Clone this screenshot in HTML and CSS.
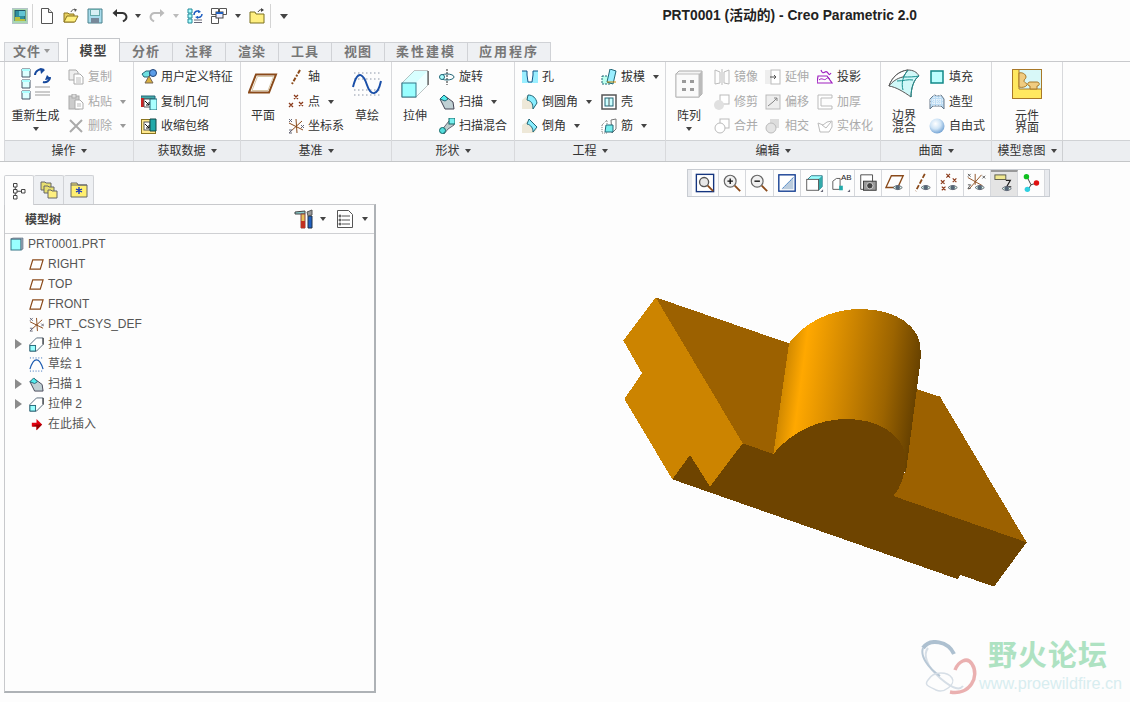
FILE: index.html
```html
<!DOCTYPE html>
<html lang="zh">
<head>
<meta charset="utf-8">
<title>PRT0001 - Creo Parametric 2.0</title>
<link rel="stylesheet" href="styles.css">
</head>
<body>
<svg class="sprite" xmlns="http://www.w3.org/2000/svg">
  <defs><radialGradient id="frs-g" cx=".4" cy=".35" r=".7"><stop offset="0" stop-color="#fff"/><stop offset=".5" stop-color="#cfe4f6"/><stop offset="1" stop-color="#6a9cd0"/></radialGradient></defs>
  <symbol id="i-app" viewBox="0 0 16 16"><rect x=".5" y=".5" width="15" height="15" fill="#a8d8b0" stroke="#b4c4c8"/><rect x="3" y="2.500" width="10" height="10" fill="#2f8f9f" stroke="#256"/><rect x="7" y="3" width="6" height="5" fill="#62c4d4"/><path d="M3 9h5v2h5v2H3z" fill="#b8c040"/></symbol>
  <symbol id="i-new" viewBox="0 0 16 16"><path d="M2.500.5h7l4 4v11h-11z" fill="#fff" stroke="#555"/><path d="M9.500.5v4h4" fill="#ddd" stroke="#555"/></symbol>
  <symbol id="i-open" viewBox="0 0 16 16"><path d="M1 5h4l1 1h5v8H1z" fill="#e8d060" stroke="#8a7520"/><path d="M1 14l3-6h11l-3 6z" fill="#fff080" stroke="#8a7520"/><path d="M8 4c1-3 4-3 5-2" fill="none" stroke="#555"/><path d="M11 .5l3 1-2 2.500z" fill="#555"/></symbol>
  <symbol id="i-save" viewBox="0 0 16 16"><path d="M1 1h14v14H1z" fill="#a8dcec" stroke="#48808c"/><rect x="3.500" y="1.500" width="9" height="6" fill="#d8f0f4" stroke="#6aa"/><rect x="4" y="10" width="8" height="5" fill="#789"/></symbol>
  <symbol id="i-undo" viewBox="0 0 16 16"><path d="M4 5h6a4 4 0 0 1 3 7l-2 1.500" fill="none" stroke="#333" stroke-width="2"/><path d="M5 1v8L.5 5z" fill="#333"/></symbol>
  <symbol id="i-redo" viewBox="0 0 16 16"><path d="M12 5H6a4 4 0 0 0-3 7l2 1.500" fill="none" stroke="#bbb" stroke-width="2"/><path d="M11 1v8l4.500-4z" fill="#bbb"/></symbol>
  <symbol id="i-regenq" viewBox="0 0 16 16"><path d="M1 1h4v4H1zM1 6h4v4H1zM1 11h4v4H1z" fill="#aff" stroke="#289"/><path d="M7 12h8M7 14.500h8" stroke="#667"/><path d="M7 7c0-4 4-5 6-3M15 6c0 3-3 4-5 3" fill="none" stroke="#1c5cc0" stroke-width="1.500"/><path d="M11 2l3 2-3 1zM11 11l-3-2 3-1z" fill="#1c5cc0"/></symbol>
  <symbol id="i-win" viewBox="0 0 16 16"><path d="M.5.5h7v6h-7zM8.500.5h7v6h-7zM.5 8.500h7v7h-7z" fill="#fff" stroke="#555"/><rect x="5" y="4" width="7" height="6" fill="#eef" stroke="#444"/><rect x="5" y="4" width="7" height="2" fill="#2060c0"/></symbol>
  <symbol id="i-wd" viewBox="0 0 16 16"><path d="M1 4h5l1 2h8v9H1z" fill="#ffef80" stroke="#7a7020"/><path d="M9 4c1-2 3-3 5-2" fill="none" stroke="#444"/><path d="M12 0l3 2-3 2z" fill="#444"/></symbol>
  <symbol id="i-copy" viewBox="0 0 16 16"><path d="M1 1h7l2 2v8H1z" fill="#eee" stroke="#aaa"/><path d="M6 5h6l3 3v7H6z" fill="#fff" stroke="#aaa"/><path d="M8 9h5M8 11h5M8 13h5" stroke="#bbb"/></symbol>
  <symbol id="i-paste" viewBox="0 0 16 16"><rect x="1" y="2" width="10" height="13" fill="#ccc" stroke="#aaa"/><rect x="4" y="0" width="4" height="4" fill="#ddd" stroke="#aaa"/><path d="M7 6h5l3 3v6H7z" fill="#fff" stroke="#aaa"/><path d="M9 10h4M9 12h4" stroke="#bbb"/></symbol>
  <symbol id="i-del" viewBox="0 0 16 16"><path d="M2 2l12 12M14 2L2 14" stroke="#aaa" stroke-width="2"/></symbol>
  <symbol id="i-udf" viewBox="0 0 16 16"><path d="M1 5l4-3h5l-2 6H3z" fill="#6fe0e0" stroke="#267"/><circle cx="12" cy="4" r="3.500" fill="#5a9ce8" stroke="#247"/><path d="M8 7l4 7H4z" fill="#d8b040" stroke="#765"/></symbol>
  <symbol id="i-cgeo" viewBox="0 0 16 16"><path d="M0 2h14v3H0z" fill="#4aa" stroke="#267"/><path d="M0 4h3v9H0z" fill="#c22"/><path d="M3 5h8v8H3z" fill="#fff" stroke="#555"/><path d="M9 5h7v11H9z" fill="#aff" stroke="#267"/><path d="M4 7l4 4m0-3v3H5" stroke="#111" fill="none"/></symbol>
  <symbol id="i-shrk" viewBox="0 0 16 16"><rect x=".5" y="1.500" width="14" height="14" fill="#ffe88c" stroke="#8a7420"/><rect x="3" y="4" width="6" height="8" fill="#fff" stroke="#555"/><path d="M9 1h6v12H9z" fill="#2aa" stroke="#144"/><path d="M4 6l4 4m0-3v3H5" stroke="#111" fill="none"/></symbol>
  <symbol id="i-regen" viewBox="0 0 30 32"><path d="M1 1h8v8H1zM1 12h8v8H1zM1 23h8v8H1z" fill="#dff" stroke="#456"/><path d="M1 1h8v2H1zM1 12h8v2H1zM1 23h8v2H1z" fill="#aff"/><path d="M14 24h15M14 27h15M14 19h15" stroke="#999"/><path d="M14 7c0-4 5-7 9-5M29 9c0 4-4 6-7 5" fill="none" stroke="#15489c" stroke-width="2"/><path d="M19 0l5 2-4 4zM26 7l4 4-6 1z" fill="#15489c"/></symbol>
  <symbol id="i-plane" viewBox="0 0 30 21"><path d="M8 1.500h20l-7 18H1z" fill="#fff" stroke="#8a4a1a" stroke-width="2"/><path d="M9.500 3.500h16l-5.500 14H4z" fill="#fff" stroke="#d8c8a8"/></symbol>
  <symbol id="i-axis" viewBox="0 0 16 16"><path d="M12 1l-8 14" stroke="#8a4a1a" stroke-width="2" stroke-dasharray="4 1.500 2 1.500"/></symbol>
  <symbol id="i-pt" viewBox="0 0 16 16"><path d="M6 1l4 4M10 1L6 5M1 9l4 4M5 9l-4 4M11 8l4 4M15 8l-4 4" stroke="#8a3a1a" stroke-width="1.300"/></symbol>
  <symbol id="i-csys" viewBox="0 0 16 16"><path d="M2 14L14 3M1 5l14 7M8 1l1 14" stroke="#8a4a1a"/><path d="M1 1l3 3M4 1L1 4M13 7l3 3M16 7l-3 3M1 12h3l-3 3h3" stroke="#667" fill="none"/></symbol>
  <symbol id="i-sk" viewBox="0 0 30 28"><path d="M2 3h27M2 25h27M2 9h27M2 20h27" stroke="#8c96a8" stroke-dasharray="1.500 2.500"/><path d="M1 17C6-3 12 6 15 15s10 14 14-4" fill="none" stroke="#1a4fa8" stroke-width="2"/></symbol>
  <symbol id="i-ext" viewBox="0 0 28 28"><path d="M1 13L13 1h14v14L15 27H1z" fill="#fff" stroke="#888"/><path d="M13 1h14L15 13H1z" fill="#d8ffff"/><path d="M15 13L27 1v14L15 27z" fill="#f0ffff"/><path d="M27 1v14" stroke="#333"/><rect x="1" y="13" width="14" height="14" fill="#9ff" stroke="#378"/></symbol>
  <symbol id="i-rev" viewBox="0 0 16 16"><path d="M8 0v16" stroke="#222" stroke-dasharray="2 1"/><ellipse cx="8" cy="8" rx="7" ry="3" fill="none" stroke="#267"/><circle cx="3" cy="8" r="2.500" fill="#aff" stroke="#267"/></symbol>
  <symbol id="i-swp" viewBox="0 0 16 16"><path d="M1 5l5 10h9l-1-7-8-6z" fill="#c0d0d4" stroke="#445"/><path d="M1 5l4-4 4 4-3 2z" fill="#5ee" stroke="#267"/></symbol>
  <symbol id="i-swb" viewBox="0 0 16 16"><path d="M2 13L10 3h5v4l-6 4-4 5z" fill="#bcc" stroke="#667"/><circle cx="3.500" cy="12.500" r="3" fill="#5dd" stroke="#166"/><rect x="10" y="0" width="6" height="6" fill="#7ee" stroke="#166"/></symbol>
  <symbol id="i-hole" viewBox="0 0 16 16"><path d="M0 2h5v4l1 7h4l1-7V2h5v12H0z" fill="#9ef"/><path d="M5 2v4l1 7h4l1-7V2z" fill="#fff"/><path d="M0 2h5v4l1 7h4l1-7V2h5" fill="none" stroke="#158"/></symbol>
  <symbol id="i-rnd" viewBox="0 0 16 16"><path d="M0 6l6-5c5 0 8 3 9 8l-4 6H0z" fill="#eee8d8"/><path d="M6 1c5 0 8 3 9 8l-4 6c0-6-2-8-6-9z" fill="#8ef" stroke="#267"/></symbol>
  <symbol id="i-chm" viewBox="0 0 16 16"><path d="M0 7l7-5 8 9-3 4H0z" fill="#eee8d8"/><path d="M7 2l8 8-4 5c0-4-2-7-6-8z" fill="#8ef" stroke="#267" transform="translate(0 -1)"/></symbol>
  <symbol id="i-drf" viewBox="0 0 16 16"><path d="M1 7h9v8H1z" fill="#bfe" stroke="#267" stroke-dasharray="2 1"/><path d="M9 0l6 2-3 13-6-2z" fill="#9ef" stroke="#267"/><path d="M6 13h9" stroke="#c80"/></symbol>
  <symbol id="i-shl" viewBox="0 0 16 16"><rect x="1" y="1" width="14" height="14" fill="#fff" stroke="#555" stroke-width="1.500"/><rect x="4" y="4" width="8" height="8" fill="#cff" stroke="#267"/><path d="M8 4v8" stroke="#555"/></symbol>
  <symbol id="i-rib" viewBox="0 0 16 16"><path d="M1 7l5-5v13H1z" fill="#fff" stroke="#777" stroke-dasharray="1 1"/><path d="M10 2l5-1v10l-4 4z" fill="#fff" stroke="#777"/><path d="M5 7h7v7H4z" fill="#7ee" stroke="#267"/></symbol>
  <symbol id="i-pat" viewBox="0 0 28 28"><path d="M1 4l3-3h23v23l-3 3H1z" fill="#f4f4f4" stroke="#aaa"/><path d="M24 4v23l3-3V1z" fill="#bbb"/><rect x="1" y="4" width="23" height="23" fill="#fafafa" stroke="#bbb"/><path d="M7 10h4v3H7zM15 10h4v3h-4zM7 18h4v3H7zM15 18h4v3h-4z" fill="#9a9a9a"/></symbol>
  <symbol id="i-mir" viewBox="0 0 16 16"><path d="M1 1l5 2v11l-5 1zM15 1l-5 2v11l5 1z" fill="none" stroke="#bbb"/><path d="M8 0v16" stroke="#bbb"/></symbol>
  <symbol id="i-trim" viewBox="0 0 16 16"><rect x="6" y="1" width="9" height="9" fill="#fff" stroke="#bbb"/><circle cx="5" cy="11" r="5" fill="#e0e0e0"/></symbol>
  <symbol id="i-mrg" viewBox="0 0 16 16"><rect x="6" y="1" width="9" height="9" fill="#fff" stroke="#bbb"/><circle cx="6" cy="10" r="5" fill="#fff" stroke="#bbb"/></symbol>
  <symbol id="i-exd" viewBox="0 0 16 16"><rect x="0" y="1" width="6" height="14" fill="#eee"/><rect x="6" y="1" width="9" height="14" fill="#fff" stroke="#bbb"/><path d="M5 8h6m-2-2l2 2-2 2" fill="none" stroke="#555"/></symbol>
  <symbol id="i-ofs" viewBox="0 0 16 16"><rect x="1" y="1" width="14" height="14" fill="#eee" stroke="#bbb"/><path d="M3 12L8 8l4-4m-3 0h3v3" fill="none" stroke="#888"/></symbol>
  <symbol id="i-int" viewBox="0 0 16 16"><rect x="5" y="1" width="9" height="9" fill="#ddd"/><circle cx="6" cy="10" r="5" fill="#e4e4e4" stroke="#bbb"/></symbol>
  <symbol id="i-prj" viewBox="0 0 16 16"><path d="M1 7h9l5 7H0z M4 1c2 6 4 0 6 2s2 4 4 1" fill="none" stroke="#a020c0" stroke-width="1.200"/><path d="M2 11c3-3 5 1 7-1s3-1 4 0" fill="none" stroke="#a020c0"/></symbol>
  <symbol id="i-thk" viewBox="0 0 16 16"><path d="M1 1h14v3H4v8h11v3H1z" fill="#fff" stroke="#bbb"/></symbol>
  <symbol id="i-sol" viewBox="0 0 16 16"><path d="M1 5l5 2 4-3 5-1v6l-3 5H3z" fill="#fff" stroke="#bbb"/><path d="M5 7l4 3 5-6" fill="none" stroke="#bbb"/></symbol>
  <symbol id="i-bnd" viewBox="0 0 32 30"><path d="M1 17C4 8 11 2 20 1c5 0 9 2 11 6-5 3-8 12-8 21-7-5-15-10-22-11z" fill="#d0f8f8" stroke="#555"/><path d="M1 17C4 8 11 2 20 1l-5 7c-6 1-11 5-14 9z" fill="#fff" stroke="#555"/><path d="M15 8c6 0 11 0 16-1-5 3-8 12-8 21" fill="none" stroke="#1a9090"/><path d="M20 1c-5 6-7 13-5 20" fill="none" stroke="#1a9090"/><path d="M9 12c6 0 11-2 16-1" fill="none" stroke="#1a9090"/></symbol>
  <symbol id="i-fill" viewBox="0 0 16 16"><rect x="2" y="2" width="12" height="12" fill="#bff" stroke="#188" stroke-width="1.500"/></symbol>
  <symbol id="i-sty" viewBox="0 0 16 16"><path d="M1 15V5l4-4c3 1 6 1 7 0l3 4v10l-3-3H4z" fill="#bcdcf4" stroke="#678"/><path d="M5 1v11M8 1v11M11 1v11M1 6h14M1 9h14" stroke="#fff" stroke-dasharray="1 1"/></symbol>
  <symbol id="i-frs" viewBox="0 0 16 16"><circle cx="8" cy="8" r="7.500" fill="url(#frs-g)"/></symbol>
  <symbol id="i-cmp" viewBox="0 0 30 30"><rect x=".5" y=".5" width="29" height="29" fill="#d8f8f8" stroke="#a87828"/><path d="M.5.5H7V20h22.500v9.500H.5z" fill="#ffe860" stroke="#a87828"/><path d="M7 4c3-1 7 1 7 4 0 2-2 2-2 4 0 2 4 2 3 4-1 2-5 3-8 2z" fill="#f0cc80" stroke="#a87828"/><path d="M18 20v-3c-3 0-3-4 0-4h7c3 0 3 4 0 4v3z" fill="#f0cc80" stroke="#a87828"/></symbol>
  <symbol id="i-tree" viewBox="0 0 14 18"><path d="M1.500 1.500h3.500V5H1.500zM1.500 7.500h3.500V11H1.500zM1.500 13.500h3.500V17H1.500zM9.500 7.500h3.500V11H9.500zM5 9.250h4.500M3.250 5v2.500M3.250 11v2.500" fill="#fff" stroke="#444"/></symbol>
  <symbol id="i-lay" viewBox="0 0 18 18"><path d="M1 1h4l1 1h5v7H1z" fill="#e8e070" stroke="#666"/><path d="M4 5h4l1 1h5v6H4z" fill="#e8e070" stroke="#666"/><path d="M8 9h3l1 1h5v7H8z" fill="#fff080" stroke="#666"/></symbol>
  <symbol id="i-fav" viewBox="0 0 18 18"><path d="M1 2h6l1 2h9v12H1z" fill="#ffef70" stroke="#666"/><path d="M1 4h16" stroke="#666"/><path d="M9 6v7M6 8l6 3M12 8l-6 3" stroke="#1030c0" stroke-width="1.300"/></symbol>
  <symbol id="i-tool" viewBox="0 0 20 20"><path d="M1 3l10-1v3L1 5z" fill="#8cc" stroke="#444"/><path d="M7 5h4v14H7z" fill="#e8c058" stroke="#844"/><path d="M7 12h4v7H7z" fill="#c03020"/><path d="M14 7h4v12h-4z" fill="#2060c0" stroke="#234"/><path d="M13 3l5-2v5l-4 1z" fill="#999" stroke="#555"/></symbol>
  <symbol id="i-list" viewBox="0 0 16 18"><path d="M.5.5h11l4 4v13H.5z" fill="#fff" stroke="#555"/><path d="M5 6h8M5 10h8M5 14h8" stroke="#555"/><circle cx="3" cy="6" r="1" fill="#fff" stroke="#333"/><circle cx="3" cy="10" r="1" fill="#fff" stroke="#333"/><circle cx="3" cy="14" r="1" fill="#fff" stroke="#333"/></symbol>
  <symbol id="i-part" viewBox="0 0 14 14"><rect x="1" y="2" width="10" height="11" fill="#9ff" stroke="#378"/><path d="M1 2l2-1h10v11l-2 1V2z" fill="#9ab" stroke="#567" stroke-width=".6"/></symbol>
  <symbol id="i-pl" viewBox="0 0 16 12"><path d="M4 1h11l-3 10H1z" fill="#fff" stroke="#8a4a1a" stroke-width="1.300"/></symbol>
  <symbol id="i-ext-s" viewBox="0 0 16 16"><path d="M1 8l7-7h7v7l-7 7H1z" fill="#fff" stroke="#567"/><path d="M15 1v7" stroke="#222"/><rect x="1" y="9" width="6" height="6" fill="#9ff" stroke="#267"/></symbol>
  <symbol id="i-sk-s" viewBox="0 0 16 16"><path d="M1 1h14M1 15h14" stroke="#1a5ab0" stroke-dasharray="1 2"/><path d="M1 13C3 6 6 3 8 3s5 3 7 10" fill="none" stroke="#1a5ab0" stroke-width="1.300"/></symbol>
  <symbol id="i-ins" viewBox="0 0 16 16"><path d="M3 6h5V2l6 6-6 6v-4H3z" fill="#e00010"/><path d="M3 10h5v4l6-6H8z" fill="#900"/></symbol>
  <symbol id="i-vz" viewBox="0 0 22 22"><rect x="1.500" y="1.500" width="19" height="19" fill="#fff" stroke="#15357f" stroke-width="1.500"/><circle cx="10" cy="10" r="5" fill="#e8e8e8" stroke="#555" stroke-width="1.500"/><path d="M14 14l6 6" stroke="#8a4a1a" stroke-width="2"/></symbol>
  <symbol id="i-vin" viewBox="0 0 22 22"><circle cx="9" cy="9" r="6.500" fill="#f0f0f0" stroke="#666" stroke-width="1.300"/><path d="M6 9h6M9 6v6" stroke="#111" stroke-width="1.500"/><path d="M14 14l6 6" stroke="#8a4a1a" stroke-width="2"/></symbol>
  <symbol id="i-vout" viewBox="0 0 22 22"><circle cx="9" cy="9" r="6.500" fill="#f0f0f0" stroke="#666" stroke-width="1.300"/><path d="M6 9h6" stroke="#111" stroke-width="1.500"/><path d="M14 14l6 6" stroke="#8a4a1a" stroke-width="2"/></symbol>
  <symbol id="i-vref" viewBox="0 0 22 22"><rect x="2" y="2" width="18" height="18" fill="#fff" stroke="#103a90" stroke-width="1.500"/><path d="M5 18L18 4v14z" fill="#bcd"/><path d="M6 17L18 5" stroke="#2a70c0" stroke-dasharray="2 1"/></symbol>
  <symbol id="i-vcube" viewBox="0 0 22 22"><path d="M4 7l4-4h12v12l-4 4z" fill="#9ff" stroke="#378"/><path d="M16 7v12l4-4V3z" fill="#3aa"/><rect x="3" y="7" width="13" height="12" fill="#fff" stroke="#555"/><path d="M21 21h-3l3-3z" fill="#667"/></symbol>
  <symbol id="i-vab" viewBox="0 0 22 22"><path d="M2 9l4-3h4v12H2z" fill="#fff" stroke="#555"/><path d="M9 14h4v5H9z" fill="#2aa"/><path d="M21 21h-3l3-3z" fill="#667"/></symbol>
  <symbol id="i-vcam" viewBox="0 0 22 22"><path d="M3 2h13v16H3z" fill="#fff" stroke="#444"/><rect x="6" y="9" width="14" height="10" fill="#999" stroke="#333"/><circle cx="13" cy="14" r="3.500" fill="#444" stroke="#ddd"/></symbol>
  <symbol id="i-eye" viewBox="0 0 22 22"><path d="M9 16c3-3 7-3 10 0-3 3-7 3-10 0z" fill="#dfe" stroke="#556"/><circle cx="14" cy="16" r="2.500" fill="#567"/></symbol>
  <symbol id="i-v1" viewBox="0 0 22 22"><path d="M7 3h13l-6 13H1z" fill="none" stroke="#8a4a1a" stroke-width="1.500"/><use href="#i-eye"/></symbol>
  <symbol id="i-v2" viewBox="0 0 22 22"><path d="M13 1L3 20" stroke="#8a4a1a" stroke-width="2" stroke-dasharray="5 2"/><use href="#i-eye"/></symbol>
  <symbol id="i-v3" viewBox="0 0 22 22"><path d="M7 1l4 4M11 1L7 5M1 8l4 4M5 8l-4 4M14 6l4 4M18 6l-4 4M2 15l4 4M6 15l-4 4" stroke="#8a3a1a" stroke-width="1.300"/><use href="#i-eye"/></symbol>
  <symbol id="i-v4" viewBox="0 0 22 22"><path d="M2 18L16 2M1 5l16 9M9 1v12" stroke="#8a4a1a"/><path d="M1 1l3 3M4 1L1 4M17 3l3 3M20 3l-3 3M1 13h3l-3 4h3" stroke="#555" fill="none"/><use href="#i-eye"/></symbol>
  <symbol id="i-v5" viewBox="0 0 22 22"><rect x="1" y="1" width="12" height="5" fill="#f0e890" stroke="#554"/><path d="M13 7h5l-4 7h5" fill="none" stroke="#222" stroke-width="1.300"/><use href="#i-eye"/></symbol>
  <symbol id="i-v6" viewBox="0 0 22 22"><path d="M7 5l4 8 6-2M11 13l-3 5" stroke="#333" fill="none"/><circle cx="6" cy="4" r="3" fill="#10c020"/><circle cx="17" cy="11" r="3" fill="#e01010"/><circle cx="7" cy="18" r="3" fill="#30d0e0"/></symbol>
</svg>

<header class="quickbar">
  <svg class="q-ico q-app"><use href="#i-app"/></svg>
  <i class="vsep"></i>
  <svg class="q-ico q-new"><use href="#i-new"/></svg>
  <svg class="q-ico q-next"><use href="#i-open"/></svg>
  <svg class="q-ico q-next"><use href="#i-save"/></svg>
  <svg class="q-ico q-undo"><use href="#i-undo"/></svg>
  <i class="caret q-c1"></i>
  <svg class="q-ico q-next"><use href="#i-redo"/></svg>
  <i class="caret caret-off q-next"></i>
  <svg class="q-ico q-next"><use href="#i-regenq"/></svg>
  <svg class="q-ico q-next"><use href="#i-win"/></svg>
  <i class="caret q-next"></i>
  <svg class="q-ico q-next"><use href="#i-wd"/></svg>
  <i class="vsep q-sep2"></i>
  <i class="caret caret-bar"></i>
  <h1 class="title">PRT0001 (活动的) - Creo Parametric 2.0</h1>
</header>

<nav class="tabs">
  <span class="tab tab-file">文件<i class="caret caret-gray"></i></span>
  <span class="tab tab-active">模型</span>
  <span class="tab">分析</span>
  <span class="tab">注释</span>
  <span class="tab">渲染</span>
  <span class="tab">工具</span>
  <span class="tab">视图</span>
  <span class="tab tab-w">柔性建模</span>
  <span class="tab tab-w">应用程序</span>
</nav>

<section class="ribbon">
  <div class="group g-ops">
    <div class="gbody">
      <div class="big big-regen"><svg class="ic-regen"><use href="#i-regen"/></svg><span class="lbl">重新生成</span><i class="caret"></i></div>
      <div class="col off">
        <span class="item"><svg class="ico"><use href="#i-copy"/></svg>复制</span>
        <span class="item"><svg class="ico"><use href="#i-paste"/></svg>粘贴<i class="caret caret-gray"></i></span>
        <span class="item"><svg class="ico"><use href="#i-del"/></svg>删除<i class="caret caret-gray"></i></span>
      </div>
    </div>
    <div class="glabel">操作<i class="caret"></i></div>
  </div>
  <div class="group g-get">
    <div class="gbody">
      <div class="col">
        <span class="item"><svg class="ico"><use href="#i-udf"/></svg>用户定义特征</span>
        <span class="item"><svg class="ico"><use href="#i-cgeo"/></svg>复制几何</span>
        <span class="item"><svg class="ico"><use href="#i-shrk"/></svg>收缩包络</span>
      </div>
    </div>
    <div class="glabel">获取数据<i class="caret"></i></div>
  </div>
  <div class="group g-dat">
    <div class="gbody">
      <div class="big big-plane"><svg class="ic-plane"><use href="#i-plane"/></svg><span class="lbl">平面</span></div>
      <div class="col col-dat">
        <span class="item"><svg class="ico"><use href="#i-axis"/></svg>轴</span>
        <span class="item"><svg class="ico"><use href="#i-pt"/></svg>点<i class="caret"></i></span>
        <span class="item"><svg class="ico"><use href="#i-csys"/></svg>坐标系</span>
      </div>
      <div class="big big-sk"><svg class="ic-sk"><use href="#i-sk"/></svg><span class="lbl">草绘</span></div>
    </div>
    <div class="glabel">基准<i class="caret"></i></div>
  </div>
  <div class="group g-shp">
    <div class="gbody">
      <div class="big big-ext"><svg class="ic-ext"><use href="#i-ext"/></svg><span class="lbl">拉伸</span></div>
      <div class="col">
        <span class="item"><svg class="ico"><use href="#i-rev"/></svg>旋转</span>
        <span class="item"><svg class="ico"><use href="#i-swp"/></svg>扫描<i class="caret"></i></span>
        <span class="item"><svg class="ico"><use href="#i-swb"/></svg>扫描混合</span>
      </div>
    </div>
    <div class="glabel">形状<i class="caret"></i></div>
  </div>
  <div class="group g-eng">
    <div class="gbody">
      <div class="col col-eng1">
        <span class="item"><svg class="ico"><use href="#i-hole"/></svg>孔</span>
        <span class="item"><svg class="ico"><use href="#i-rnd"/></svg>倒圆角<i class="caret"></i></span>
        <span class="item"><svg class="ico"><use href="#i-chm"/></svg>倒角<i class="caret"></i></span>
      </div>
      <div class="col">
        <span class="item"><svg class="ico"><use href="#i-drf"/></svg>拔模<i class="caret"></i></span>
        <span class="item"><svg class="ico"><use href="#i-shl"/></svg>壳</span>
        <span class="item"><svg class="ico"><use href="#i-rib"/></svg>筋<i class="caret"></i></span>
      </div>
    </div>
    <div class="glabel">工程<i class="caret"></i></div>
  </div>
  <div class="group g-edt">
    <div class="gbody">
      <div class="big big-pat"><svg class="ic-ext"><use href="#i-pat"/></svg><span class="lbl">阵列</span><i class="caret"></i></div>
      <div class="col col-e1 off">
        <span class="item"><svg class="ico"><use href="#i-mir"/></svg>镜像</span>
        <span class="item"><svg class="ico"><use href="#i-trim"/></svg>修剪</span>
        <span class="item"><svg class="ico"><use href="#i-mrg"/></svg>合并</span>
      </div>
      <div class="col col-e1 off">
        <span class="item"><svg class="ico"><use href="#i-exd"/></svg>延伸</span>
        <span class="item"><svg class="ico"><use href="#i-ofs"/></svg>偏移</span>
        <span class="item"><svg class="ico"><use href="#i-int"/></svg>相交</span>
      </div>
      <div class="col col-e3 off">
        <span class="item on"><svg class="ico"><use href="#i-prj"/></svg>投影</span>
        <span class="item"><svg class="ico"><use href="#i-thk"/></svg>加厚</span>
        <span class="item"><svg class="ico"><use href="#i-sol"/></svg>实体化</span>
      </div>
    </div>
    <div class="glabel">编辑<i class="caret"></i></div>
  </div>
  <div class="group g-srf">
    <div class="gbody">
      <div class="big big-bnd"><svg class="ic-bnd"><use href="#i-bnd"/></svg><span class="lbl lbl2">边界<br>混合</span></div>
      <div class="col">
        <span class="item"><svg class="ico"><use href="#i-fill"/></svg>填充</span>
        <span class="item"><svg class="ico"><use href="#i-sty"/></svg>造型</span>
        <span class="item"><svg class="ico"><use href="#i-frs"/></svg>自由式</span>
      </div>
    </div>
    <div class="glabel">曲面<i class="caret"></i></div>
  </div>
  <div class="group g-int">
    <div class="gbody">
      <div class="big big-cmp"><svg class="ic-bnd"><use href="#i-cmp"/></svg><span class="lbl lbl2">元件<br>界面</span></div>
    </div>
    <div class="glabel">模型意图<i class="caret"></i></div>
  </div>
  <div class="group g-rest">
    <div class="gbody"></div>
    <div class="glabel"></div>
  </div>
</section>

<main class="workspace">
  <aside class="side">
    <div class="side-tabs">
      <span class="stab stab-on"><svg class="stab-ico"><use href="#i-tree"/></svg></span>
      <span class="stab"><svg class="stab-ico"><use href="#i-lay"/></svg></span>
      <span class="stab"><svg class="stab-ico"><use href="#i-fav"/></svg></span>
    </div>
    <div class="panel">
      <div class="panel-head">
        <strong class="panel-title">模型树</strong>
        <svg class="head-ico"><use href="#i-tool"/></svg><i class="caret head-caret"></i>
        <svg class="head-ico head-list"><use href="#i-list"/></svg><i class="caret head-caret head-caret2"></i>
      </div>
      <ul class="tree">
        <li class="row row-root"><svg class="rico-root"><use href="#i-part"/></svg>PRT0001.PRT</li>
        <li class="row"><i class="tw"></i><svg class="rico"><use href="#i-pl"/></svg>RIGHT</li>
        <li class="row"><i class="tw"></i><svg class="rico"><use href="#i-pl"/></svg>TOP</li>
        <li class="row"><i class="tw"></i><svg class="rico"><use href="#i-pl"/></svg>FRONT</li>
        <li class="row"><i class="tw"></i><svg class="rico"><use href="#i-csys"/></svg>PRT_CSYS_DEF</li>
        <li class="row"><i class="tw tw-on"></i><svg class="rico"><use href="#i-ext-s"/></svg>拉伸 1</li>
        <li class="row"><i class="tw"></i><svg class="rico"><use href="#i-sk-s"/></svg>草绘 1</li>
        <li class="row"><i class="tw tw-on"></i><svg class="rico"><use href="#i-swp"/></svg>扫描 1</li>
        <li class="row"><i class="tw tw-on"></i><svg class="rico"><use href="#i-ext-s"/></svg>拉伸 2</li>
        <li class="row"><i class="tw"></i><svg class="rico"><use href="#i-ins"/></svg>在此插入</li>
      </ul>
    </div>
  </aside>

  <div class="canvas">
    <div class="viewbar">
      <span class="vb"><svg class="vi"><use href="#i-vz"/></svg></span>
      <span class="vb"><svg class="vi"><use href="#i-vin"/></svg></span>
      <span class="vb"><svg class="vi"><use href="#i-vout"/></svg></span>
      <span class="vb"><svg class="vi"><use href="#i-vref"/></svg></span>
      <span class="vb"><svg class="vi"><use href="#i-vcube"/></svg></span>
      <span class="vb vb-ab"><svg class="vi"><use href="#i-vab"/></svg><b class="ab">AB</b></span>
      <span class="vb"><svg class="vi"><use href="#i-vcam"/></svg></span>
      <span class="vb"><svg class="vi"><use href="#i-v1"/></svg></span>
      <span class="vb"><svg class="vi"><use href="#i-v2"/></svg></span>
      <span class="vb"><svg class="vi"><use href="#i-v3"/></svg></span>
      <span class="vb"><svg class="vi"><use href="#i-v4"/></svg></span>
      <span class="vb vb-on"><svg class="vi"><use href="#i-v5"/></svg></span>
      <span class="vb"><svg class="vi"><use href="#i-v6"/></svg></span>
    </div>

    <svg class="model" viewBox="0 0 1290 930" shape-rendering="crispEdges">
      <defs>
        <linearGradient id="cyl" gradientUnits="userSpaceOnUse" x1="490" y1="300" x2="935" y2="360">
          <stop offset="0" stop-color="#b87800"/>
          <stop offset=".18" stop-color="#ffa800"/>
          <stop offset=".5" stop-color="#c98200"/>
          <stop offset=".75" stop-color="#9c6400"/>
          <stop offset="1" stop-color="#5c3a00"/>
        </linearGradient>
      </defs>
      <path fill="#cc8400" d="M137 37L40 167 96 265 43 342 187 583 240 510 300 605 398 475z"/>
      <path fill="#9c6100" d="M137 37L537 175 490 507 398 475z"/>
      <path fill="#9c6100" d="M920 312L990 335 1250 772 850 633 885 560z"/>
      <path fill="url(#cyl)" d="M537 175C580 115 660 72 750 72C860 72 935 125 932 200C932 215 932 225 930 240L888 560L490 507z"/>
      <path fill="#6e4400" d="M187 583L240 510 300 605 398 475 490 507C540 445 620 402 710 402C800 402 875 445 886 510C890 560 875 605 850 633L1250 772 1152 905 1052 870 1042 882z"/>
    </svg>

    <div class="mark">
      <svg class="mark-logo" viewBox="0 0 60 58">
        <path d="M8 8C3 14 6 26 20 38s20 12 23 8" fill="none" stroke="#d6dee6" stroke-width="2"/>
        <path d="M3 8C10-2 28 1 34 14" fill="none" stroke="#adc0d0" stroke-width="4"/>
        <path d="M3 8C0 16 8 28 20 36" fill="none" stroke="#b8c8d6" stroke-width="2"/>
        <path d="M30 52C50 56 60 36 52 24 47 16 38 22 35 30" fill="none" stroke="#eab0b0" stroke-width="3.500"/>
        <path d="M8 40c6-10 20-8 24-2s-8 16-16 12-12-5-8-10z" fill="none" stroke="#d6dee6" stroke-width="1.500"/>
      </svg>
      <div class="mark-text">
        <span class="mark-cn">野火论坛</span>
        <span class="mark-url">www.proewildfire.cn</span>
      </div>
    </div>
  </div>
</main>
</body>
</html>
```

FILE: styles.css
```css
* { box-sizing: border-box; }
html, body { margin: 0; padding: 0; }
body {
  width: 1130px;
  height: 702px;
  overflow: hidden;
  background: #fdfdfd;
  font: 12px/1 "Liberation Sans", "Noto Sans CJK SC", sans-serif;
  color: #333;
  display: flex;
  flex-direction: column;
}
i { display: block; font-style: normal; }
.sprite { width: 0; height: 0; flex: none; }

/* quick access bar */
.quickbar { height: 38px; flex: none; display: flex; align-items: center; padding: 0 0 6px 12px; }
.q-ico { width: 16px; height: 16px; flex: none; }
.vsep { width: 1px; height: 24px; background: #d4d4d4; margin-left: 4px; }
.q-new { margin-left: 6px; }
.q-next { margin-left: 8px; }
.q-undo { margin-left: 9px; }
.q-c1 { margin-left: 7px; }
.q-sep2 { margin-left: 5px; }
.caret {
  width: 0; height: 0; flex: none;
  border-left: 3px solid transparent;
  border-right: 3px solid transparent;
  border-top: 4px solid #444;
}
.caret-off { border-top-color: #bbb; }
.caret-gray { border-top-color: #999; }
.caret-bar { margin-left: 9px; border-left-width: 4px; border-right-width: 4px; border-top-width: 5px; }
.title {
  margin: 0 213px 0 auto;
  font: bold 13.8px/1 "Liberation Sans", "Noto Sans CJK SC", sans-serif;
  color: #222;
}

/* tabs */
.tabs { height: 23px; flex: none; display: flex; align-items: flex-end; padding-left: 4px; }
.tab {
  width: 53px; height: 19px;
  padding-bottom: 2px;
  display: flex; align-items: center; justify-content: center;
  background: #eef0f3;
  border: 1px solid #d0d2d6;
  border-left: 0;
  border-bottom: 0;
  font-weight: bold;
  font-size: 13px;
  letter-spacing: 1px;
  color: #777;
}
.tab-file { width: 55px; border-left: 1px solid #d0d2d6; gap: 3px; margin-right: 8px; }
.tab-active {
  width: 53px; height: 24px;
  padding-bottom: 0;
  margin-bottom: -1px;
  background: #fdfdfd;
  border: 1px solid #c4c6ca;
  border-bottom: 0;
  color: #444;
  position: relative;
  z-index: 1;
}
.tab-w { width: 83px; letter-spacing: 2px; }

/* ribbon */
.ribbon { height: 101px; flex: none; display: flex; padding-left: 4px; border-top: 1px solid #c8c9cc; border-bottom: 1px solid #c4c6c8; }
.group { flex: none; display: flex; flex-direction: column; border-left: 1px solid #d8d9dc; }
.gbody { height: 78px; display: flex; padding-top: 1px; }
.glabel {
  height: 21px; flex: none;
  background: #eceef1;
  border-top: 1px solid #d0d2d5;
  border-right: 1px solid #cdcfd2;
  margin-right: -1px;
  display: flex; align-items: center; justify-content: center; gap: 5px;
  color: #333;
}
.g-ops { width: 129px; }
.g-get { width: 107px; }
.g-dat { width: 151px; }
.g-shp { width: 123px; }
.g-eng { width: 151px; }
.g-edt { width: 215px; }
.g-srf { width: 111px; }
.g-int { width: 72px; border-right: 1px solid #d8d9dc; }
.g-rest { flex: 1; border-left: 0; }
.g-rest .glabel { border-right: 0; margin-right: 0; }

.col { display: flex; flex-direction: column; padding-top: 2px; }
.item { height: 24.5px; display: flex; align-items: center; white-space: nowrap; }
.ico { width: 16px; height: 16px; margin-right: 4px; flex: none; }
.item .caret { margin-left: 8px; }
.off .item { color: #aaa; }
.off .item.on { color: #333; }

.big { display: flex; flex-direction: column; align-items: center; }
.lbl2 { line-height: 12px; margin-top: 11px; }
.big .caret { margin-top: 5px; }
.ic-regen { width: 30px; height: 32px; margin: 5px 0 10px; }
.ic-plane { width: 30px; height: 21px; margin: 10px 0 16px; }
.ic-sk { width: 30px; height: 28px; margin: 7px 0 12px; }
.ic-ext { width: 28px; height: 28px; margin: 7px 0 12px; }
.ic-bnd { width: 32px; height: 30px; margin: 6px 0 0; }

.g-ops .big { width: 59px; margin-left: 1px; }
.g-ops .col { margin-left: 3px; }
.g-get .col { margin-left: 7px; }
.big-plane { width: 30px; margin-left: 7px; }
.col-dat { margin-left: 10px; width: 65px; }
.g-dat .col-dat { width: 64px; }
.big-sk { width: 30px; }
.big-ext { width: 28px; margin-left: 9px; }
.g-shp .col { margin-left: 10px; }
.g-eng .col { margin-left: 7px; }
.g-eng .col-eng1 { width: 72px; }
.big-pat { width: 28px; margin-left: 9px; }
.g-edt .col { margin-left: 11px; }
.g-edt .col-e1 { width: 40px; }
.g-edt .col-e3 { margin-left: 12px; }
.big-bnd { width: 32px; margin-left: 7px; }
.g-srf .col { margin-left: 9px; }
.big-cmp { width: 30px; margin-left: 20px; }
.big-cmp svg { width: 30px; }

/* workspace */
.workspace { flex: 1; min-height: 0; display: flex; padding: 13px 0 9px 4px; }
.side { width: 372px; flex: none; display: flex; flex-direction: column; }
.side-tabs { height: 29px; flex: none; display: flex; }
.stab {
  width: 30px; height: 29px;
  display: flex; align-items: center; justify-content: center;
  background: #eef0f3;
  border: 1px solid #d0d2d6;
  border-left: 0;
  border-bottom: 0;
  border-radius: 2px 2px 0 0;
}
.stab-on { background: #fdfdfd; border-left: 1px solid #d0d2d6; height: 30px; margin-bottom: -1px; position: relative; z-index: 1; }
.stab-ico { width: 18px; height: 18px; }
.panel { flex: 1; background: #fdfdfd; border: 1px solid #c8c9cc; border-right: 2px solid #aeb2b6; border-bottom: 2px solid #aeb2b6; }
.panel-head { height: 29px; display: flex; align-items: center; border-bottom: 1px solid #cfd0d3; padding: 0 6px 0 20px; }
.panel-title { font-size: 12px; font-weight: bold; color: #444; margin: 1px auto 0 0; }
.head-ico { width: 20px; height: 20px; }
.head-list { width: 16px; height: 18px; margin-left: 11px; }
.head-caret { margin-left: 6px; }
.head-caret2 { margin-left: 9px; }
.tree { list-style: none; margin: 0; padding: 0; color: #555; }
.row { height: 20px; display: flex; align-items: center; padding-left: 9px; white-space: nowrap; }
.row-root { padding-left: 5px; }
.rico-root { width: 14px; height: 14px; margin-right: 4px; }
.rico { width: 15px; height: 15px; margin-right: 4px; flex: none; }
.tw { width: 15px; height: 10px; flex: none; }
.tw-on { width: 0; height: 0; margin-left: 1px; margin-right: 7px; border-left: 7px solid #8c8c8c; border-top: 5px solid transparent; border-bottom: 5px solid transparent; }

/* graphics window */
.canvas { flex: 1; position: relative; margin-top: -13px; }
.viewbar {
  position: absolute; left: 311px; top: 7px;
  width: 363px; height: 28px;
  display: flex;
  padding: 0 0 0 4px;
  background: #e8eaee;
  border: 1px solid #c8ccd2;
}
.vb { width: 27.2px; height: 26px; flex: none; display: flex; align-items: center; justify-content: center; background: #fdfdfd; border-right: 1px solid #d6d8dc; }
.vb-on { background: #e4e4e4; border-top: 2px solid #999; }
.vb-ab { position: relative; }
.ab { position: absolute; left: 13px; top: 3px; font: 8px/9px "Liberation Sans", sans-serif; color: #222; }
.vi { width: 20px; height: 20px; }
.model { position: absolute; left: 234px; top: 123px; width: 430px; height: 310px; }

.mark { position: absolute; left: 544px; top: 476px; display: flex; }
.mark-logo { width: 60px; height: 58px; flex: none; margin-top: 2px; }
.mark-text { display: flex; flex-direction: column; margin-left: -1px; }
.mark-cn { margin-left: 9px; font: bold 29px/30px "Noto Sans CJK SC", sans-serif; letter-spacing: 1px; color: #aee2c2; white-space: nowrap; }
.mark-url { font: 16.2px/20px "Liberation Sans", sans-serif; color: #d8edf0; margin-top: 5px; white-space: nowrap; }
```
